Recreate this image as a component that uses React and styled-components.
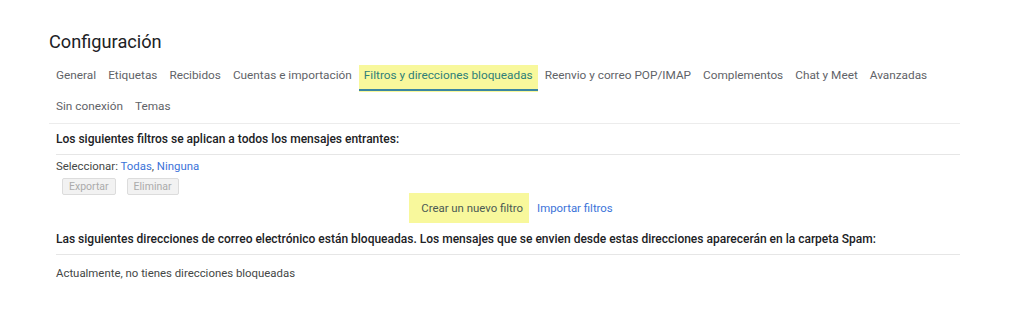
import React from 'react'
import styled, { createGlobalStyle } from 'styled-components'

const GlobalStyle = createGlobalStyle`
  body {
    margin: 0;
    background: #ffffff;
    font-family: Roboto, "Liberation Sans", Arial, sans-serif;
  }
`

const Page = styled.main`
  display: flex;
  flex-direction: column;
  padding: 29px 64px 0 49px;
`

const Title = styled.h1`
  margin: 0;
  font-size: 18.2px;
  font-weight: 400;
  line-height: 25px;
  color: #202124;
`

const Tabs = styled.nav`
  display: flex;
  flex-wrap: wrap;
  column-gap: 2px;
  row-gap: 4px;
  margin: 11px 0 0 2px;
`

const Tab = styled.span`
  height: 27px;
  padding: 2px 5px 0;
  box-sizing: border-box;
  font-size: 11.8px;
  line-height: 16px;
  white-space: nowrap;
  color: ${(props) => (props.active ? '#2f7f78' : '#5f6368')};
  background: ${(props) => (props.active ? '#f8f89c' : 'transparent')};
  box-shadow: ${(props) =>
    props.active ? 'inset 0 -1px 0 #f8f89c, inset 0 -3px 0 #3a86a0' : 'none'};
`

const Divider = styled.hr`
  margin: 0;
  border: none;
  border-top: 1px solid #ececec;
`

const Section = styled.section`
  display: flex;
  flex-direction: column;
  padding-left: 7px;
`

const Heading = styled.div`
  padding: 8px 0 7px;
  font-size: 12px;
  line-height: 15px;
  font-weight: 500;
  color: #202124;
  border-bottom: 1px solid #e6e6e6;
`

const Select = styled.div`
  padding-top: 4px;
  font-size: 11.4px;
  line-height: 15px;
  color: #444746;
`

const Link = styled.a`
  color: #3b73d9;
  text-decoration: none;
`

const Buttons = styled.div`
  display: flex;
  gap: 11px;
  margin: 4px 0 0 6px;
`

const Button = styled.button`
  height: 17px;
  padding: 0 6px;
  font-family: inherit;
  font-size: 10.5px;
  line-height: 14px;
  color: #ababab;
  background: #f2f2f2;
  border: 1px solid #dcdcdc;
  border-radius: 2px;
`

const Actions = styled.div`
  display: flex;
  justify-content: center;
  align-items: center;
  padding-left: 6px;
  margin-top: -2px;
  margin-bottom: 1px;
`

const Create = styled.span`
  display: flex;
  align-items: center;
  height: 30px;
  padding: 0 6px 0 12px;
  background: #f8f89c;
  font-size: 11.4px;
  color: #4b5a54;
`

const Import = styled(Link)`
  margin-left: 8px;
  font-size: 11.4px;
`

const Empty = styled.div`
  padding-top: 11px;
  font-size: 11.4px;
  line-height: 15px;
  color: #444746;
`

const tabs = [
  'General',
  'Etiquetas',
  'Recibidos',
  'Cuentas e importación',
  'Filtros y direcciones bloqueadas',
  'Reenvio y correo POP/IMAP',
  'Complementos',
  'Chat y Meet',
  'Avanzadas',
  'Sin conexión',
  'Temas'
]

function App() {
  return (
    <>
      <GlobalStyle />
      <Page>
        <Title>Configuración</Title>
        <Tabs>
          {tabs.map((t) => (
            <Tab key={t} active={t === 'Filtros y direcciones bloqueadas'}>
              {t}
            </Tab>
          ))}
        </Tabs>
        <Divider />
        <Section>
          <Heading>Los siguientes filtros se aplican a todos los mensajes entrantes:</Heading>
          <Select>
            Seleccionar: <Link href="#">Todas</Link>, <Link href="#">Ninguna</Link>
          </Select>
          <Buttons>
            <Button disabled>Exportar</Button>
            <Button disabled>Eliminar</Button>
          </Buttons>
          <Actions>
            <Create>Crear un nuevo filtro</Create>
            <Import href="#">Importar filtros</Import>
          </Actions>
          <Heading>
            Las siguientes direcciones de correo electrónico están bloqueadas. Los mensajes que se envien
            desde estas direcciones aparecerán en la carpeta Spam:
          </Heading>
          <Empty>Actualmente, no tienes direcciones bloqueadas</Empty>
        </Section>
      </Page>
    </>
  )
}

export default App
